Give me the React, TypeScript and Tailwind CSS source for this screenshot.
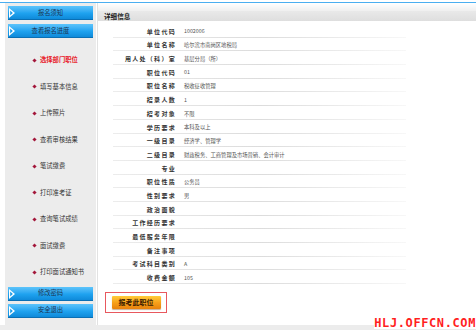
import React from 'react';

const FONT = { fontFamily: '"Noto Sans CJK SC", "Noto Sans", sans-serif' };

const ROWS: [string, string][] = [
  ['单位代码', '1002006'],
  ['单位名称', '哈尔滨市南岗区地税局'],
  ['用人处（科）室', '基层分局（所）'],
  ['职位代码', '01'],
  ['职位名称', '税收征收管理'],
  ['招录人数', '1'],
  ['招考对象', '不限'],
  ['学历要求', '本科及以上'],
  ['一级目录', '经济学、管理学'],
  ['二级目录', '财政税务、工商管理及市场营销、会计审计'],
  ['专业', ''],
  ['职位性质', '公务员'],
  ['性别要求', '男'],
  ['政治面貌', ''],
  ['工作经历要求', ''],
  ['最低服务年限', ''],
  ['备注事项', ''],
  ['考试科目类别', 'A'],
  ['收费金额', '105'],
];

const MENU = [
  '选择部门职位',
  '填写基本信息',
  '上传照片',
  '查看审核结果',
  '笔试缴费',
  '打印准考证',
  '查询笔试成绩',
  '面试缴费',
  '打印面试通知书',
];

// blue sidebar button with the little white arrow on the left
function BlueButton({ label }: { label: string }) {
  return (
    <div className="relative flex h-[14px] items-center justify-center bg-gradient-to-b from-[#5cc4fb] via-[#1fa3f0] to-[#0b86d6] shadow-[inset_0_-1px_0_#0a6fb4]">
      <svg className="absolute left-[1px] top-[2px]" width="6" height="10" viewBox="0 0 6 10">
        <polygon points="0,0 6,5 0,10" fill="#ffffff" />
        <polygon points="1.2,2.6 3.8,5 1.2,7.4" fill="#1a9ce8" />
      </svg>
      <span className="text-[6.3px] leading-none text-[#1c3553]">{label}</span>
    </div>
  );
}

export default function App() {
  return (
    <div className="relative h-[330px] w-[476px] overflow-hidden bg-white" style={FONT}>
      <div className="h-[2px] bg-white" />
      <div className="h-px bg-[#4aaef0]" />

      <div className="flex h-[322px]">
        {/* sidebar */}
        <div className="ml-[5px] flex w-[91px] flex-col bg-[#ececec] px-[3px] pt-[3px]">
          <div className="flex flex-col gap-[4px]">
            <BlueButton label="报名须知" />
            <BlueButton label="查看报名进度" />
          </div>
          <div className="mt-[9px] flex flex-col">
            {MENU.map((m, i) => (
              <div key={m} className="flex h-[26.5px] items-center pl-[25px]">
                <span className="mr-[4px] h-[3px] w-[3px] rotate-45 bg-[#a3163a]" />
                <span
                  className={`text-[6.3px] leading-none ${i === 0 ? 'font-bold text-[#e8202a]' : 'text-[#333333]'}`}
                >
                  {m}
                </span>
              </div>
            ))}
          </div>
          <div className="mt-px flex flex-col gap-[3px]">
            <BlueButton label="修改密码" />
            <BlueButton label="安全退出" />
          </div>
        </div>

        {/* detail panel */}
        <div className="ml-px flex flex-1 flex-col border-l border-[#e2e2e2] bg-white">
          <div className="h-[8px] bg-gradient-to-b from-white to-[#efefef]" />
          <div className="flex h-[10px] items-center bg-gradient-to-b from-[#e9e9e9] to-[#dedede] pl-[6px]">
            <span className="text-[6.6px] font-bold leading-none text-[#222222]">详细信息</span>
          </div>

          <div className="ml-[15px] mt-[3px] w-[293px]">
            {ROWS.map(([k, v]) => (
              <div key={k} className="flex h-[13.7px] flex-col">
                <div className="flex flex-1 items-end pb-[2px]">
                  <span className="w-[63px] text-right text-[6px] font-bold leading-none tracking-[1.3px] text-[#333333]">
                    {k}
                  </span>
                  <span className="ml-[8px] text-[5.3px] leading-none text-[#555555]">{v}</span>
                </div>
                <div className="h-px bg-gradient-to-r from-[#ececec] via-[#dcdcdc] to-[#f7f7f7]" />
              </div>
            ))}
          </div>

          <div className="ml-[7px] mt-[8px] flex h-[21px] w-[62px] items-center justify-center border border-[#e8585e] bg-white">
            <div className="flex h-[13px] w-[49px] items-center justify-center rounded-[1px] bg-gradient-to-b from-[#ffcc3a] via-[#f7a11a] to-[#e8820c] shadow-[0_1px_1px_rgba(120,60,0,0.4)]">
              <span className="text-[7px] font-bold leading-none text-[#3a1a00]">报考此职位</span>
            </div>
          </div>
        </div>
      </div>

      <div className="h-[5px] bg-[#ececec]" />

      {/* site watermark */}
      <div
        className="absolute bottom-[1px] right-0 bg-white text-[12px] font-bold leading-none tracking-[0.6px] text-[#ff1f1f]"
        style={{ fontFamily: '"DejaVu Sans Mono", monospace' }}
      >
        HLJ.OFFCN.COM
      </div>
    </div>
  );
}
